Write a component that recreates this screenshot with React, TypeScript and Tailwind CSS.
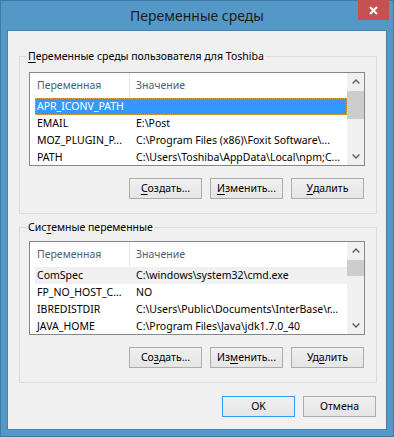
import type { ReactNode } from "react";

type Row = { name: string; value: string };

const userVars: Row[] = [
  { name: "APR_ICONV_PATH", value: "" },
  { name: "EMAIL", value: "E:\\Post" },
  { name: "MOZ_PLUGIN_P...", value: "C:\\Program Files (x86)\\Foxit Software\\..." },
  { name: "PATH", value: "C:\\Users\\Toshiba\\AppData\\Local\\npm;C..." },
];

const systemVars: Row[] = [
  { name: "ComSpec", value: "C:\\windows\\system32\\cmd.exe" },
  { name: "FP_NO_HOST_C...", value: "NO" },
  { name: "IBREDISTDIR", value: "C:\\Users\\Public\\Documents\\InterBase\\r..." },
  { name: "JAVA_HOME", value: "C:\\Program Files\\Java\\jdk1.7.0_40" },
];

function Chevron({ down }: { down?: boolean }) {
  return (
    <svg width="8" height="5" viewBox="0 0 8 5" className={down ? "rotate-180" : ""}>
      <path d="M0.6 4.4 L4 1 L7.4 4.4" fill="none" stroke="#606060" strokeWidth="1.4" />
    </svg>
  );
}

// mnemonic letter, underlined like the Alt-key hints
function U({ children }: { children: ReactNode }) {
  return <span className="underline underline-offset-[2px]">{children}</span>;
}

function Button({ children, primary }: { children: ReactNode; primary?: boolean }) {
  return (
    <button
      className={
        "flex h-[21px] w-[73px] items-center justify-center border bg-gradient-to-b from-[#f0f0f0] to-[#e5e5e5] text-black " +
        (primary ? "border-[#3399ff]" : "border-[#acacac]")
      }
    >
      {children}
    </button>
  );
}

function ListView({
  rows,
  mode,
  thumbTop,
  thumbHeight,
}: {
  rows: Row[];
  mode: "selected" | "inactive";
  thumbTop: number;
  thumbHeight: number;
}) {
  return (
    <div className="flex h-[94px] w-[336px] border border-[#828790] bg-white">
      <div className="flex-1 overflow-hidden">
        <div className="flex h-[25px] items-center text-[#4c607a]">
          <div className="flex h-full w-[100px] items-center border-r border-[#e5e5e5] pl-[7px]">
            Переменная
          </div>
          <div className="pl-[6px]">Значение</div>
        </div>
        {rows.map((r, i) => {
          let rowCls = "border-transparent text-black";
          if (i === 0 && mode === "selected") rowCls = "border-dotted border-[#f0a040] bg-[#3399ff] text-white";
          if (i === 0 && mode === "inactive") rowCls = "border-transparent bg-[#f0f0f0] text-black";
          return (
            <div key={r.name} className="flex h-[17px] pl-[5px]">
              <div className={"flex h-full flex-1 items-center border " + rowCls}>
                <div className="w-[94px] whitespace-nowrap pl-[1px]">{r.name}</div>
                <div className="whitespace-nowrap pl-[6px]">{r.value}</div>
              </div>
            </div>
          );
        })}
      </div>
      <div className="flex w-[17px] flex-col bg-[#f0f0f0]">
        <div className="flex h-[17px] items-center justify-center">
          <Chevron />
        </div>
        <div className="relative flex-1">
          <div
            className="absolute left-0 right-0 bg-[#cdcdcd]"
            style={{ top: thumbTop, height: thumbHeight }}
          />
        </div>
        <div className="flex h-[17px] items-center justify-center">
          <Chevron down />
        </div>
      </div>
    </div>
  );
}

function Group({
  legend,
  children,
  className,
}: {
  legend: ReactNode;
  children: ReactNode;
  className?: string;
}) {
  return (
    <fieldset
      className={
        "ml-[11px] w-[358px] border border-[#dcdcdc] pb-[14px] pl-[9px] pr-[11px] " + (className ?? "")
      }
    >
      <legend className="ml-[-2px] px-[1px] leading-[16px] text-black">{legend}</legend>
      {children}
    </fieldset>
  );
}

export default function App() {
  return (
    <div className="flex h-[437px] w-[394px] flex-col border border-[#3f7aa5] bg-[#5498c7] px-[6px] pb-[6px] font-['Noto_Sans',sans-serif] text-[10.5px]">
      {/* title bar */}
      <div className="relative flex h-[29px] items-center justify-center">
        <span className="text-[14px] text-[#1c1c1c]">Переменные среды</span>
        <div className="absolute right-[-2px] top-[-1px] flex h-[20px] w-[31px] items-center justify-center bg-[#c75050]">
          <svg width="9" height="9" viewBox="0 0 9 9">
            <path d="M1 1 L8 8 M8 1 L1 8" stroke="white" strokeWidth="2" />
          </svg>
        </div>
      </div>

      <div className="flex flex-1 flex-col border border-[#4682ad] bg-[#f0f0f0]">
        <Group
          className="mt-[17px]"
          legend={
            <>
              <U>П</U>еременные среды пользователя для Toshiba
            </>
          }
        >
          <div className="mt-[8px]">
            <ListView rows={userVars} mode="selected" thumbTop={1} thumbHeight={28} />
          </div>
          <div className="mt-[12px] flex justify-end gap-[8px] pr-[1px]">
            <Button>
              <U>С</U>оздать...
            </Button>
            <Button>
              <U>И</U>зменить...
            </Button>
            <Button>
              <U>У</U>далить
            </Button>
          </div>
        </Group>

        <Group
          className="mt-[5px]"
          legend={
            <>
              Сис<U>т</U>емные переменные
            </>
          }
        >
          <div className="mt-[6px]">
            <ListView rows={systemVars} mode="inactive" thumbTop={1} thumbHeight={16} />
          </div>
          <div className="mt-[12px] flex justify-end gap-[8px] pr-[1px]">
            <Button>
              Со<U>з</U>дать...
            </Button>
            <Button>
              Из<U>м</U>енить...
            </Button>
            <Button>
              Уд<U>а</U>лить
            </Button>
          </div>
        </Group>

        <div className="mt-[13px] flex justify-end gap-[8px] pr-[10px]">
          <Button primary>OK</Button>
          <Button>Отмена</Button>
        </div>
      </div>
    </div>
  );
}
